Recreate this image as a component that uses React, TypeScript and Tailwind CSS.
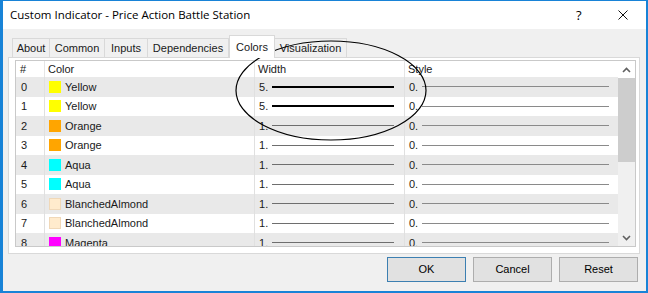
import React from "react";

const rows = [
  { n: 0, name: "Yellow", c: "#ffff00", w: 5 },
  { n: 1, name: "Yellow", c: "#ffff00", w: 5 },
  { n: 2, name: "Orange", c: "#ffa500", w: 1 },
  { n: 3, name: "Orange", c: "#ffa500", w: 1 },
  { n: 4, name: "Aqua", c: "#00ffff", w: 1 },
  { n: 5, name: "Aqua", c: "#00ffff", w: 1 },
  { n: 6, name: "BlanchedAlmond", c: "#ffebcd", w: 1 },
  { n: 7, name: "BlanchedAlmond", c: "#ffebcd", w: 1 },
  { n: 8, name: "Magenta", c: "#ff00ff", w: 1 },
];

const tabs = [
  { t: "About", w: "w-[38px]" },
  { t: "Common", w: "w-[55px]" },
  { t: "Inputs", w: "w-[43px]" },
  { t: "Dependencies", w: "w-[81px]" },
  { t: "Colors", w: "w-[46px]", active: true },
  { t: "Visualization", w: "w-[72px]" },
];

function Chevron({ up }: { up?: boolean }) {
  return (
    <svg width="9" height="6" viewBox="0 0 9 6">
      <path
        d={up ? "M1 5 L4.5 1.5 L8 5" : "M1 1 L4.5 4.5 L8 1"}
        fill="none"
        stroke="#606060"
        strokeWidth="1.6"
      />
    </svg>
  );
}

export default function App() {
  return (
    <div
      className="relative w-[648px] h-[293px] bg-[#1883d7] pt-[1px] pl-[3px] pr-[2px] pb-[2px] text-[#1a1a1a]"
      style={{ fontFamily: '"Liberation Sans", Arial, sans-serif' }}
    >
      <div className="h-full w-full bg-[#f0f0f0] flex flex-col">
        {/* title bar */}
        <div className="h-[28px] bg-white flex items-center shrink-0">
          <div
            className="pl-[7px] text-[11.5px] text-black flex-1 leading-none"
            style={{ fontFamily: '"Open Sans", "Noto Sans", sans-serif' }}
          >
            Custom Indicator - Price Action Battle Station
          </div>
          <div className="w-[14px] text-[13px] text-black leading-none mr-[28px]" style={{ fontFamily: '"Open Sans", sans-serif' }}>?</div>
          <svg width="10" height="10" viewBox="0 0 10 10" className="mr-[18px]">
            <path d="M0.5 0.5 L9.5 9.5 M9.5 0.5 L0.5 9.5" stroke="#111" strokeWidth="1" />
          </svg>
        </div>

        {/* tabs */}
        <div className="flex items-end h-[28px] pl-[9px] shrink-0">
          {tabs.map((t) =>
            t.active ? (
              <div
                key={t.t}
                className={`${t.w} h-[23px] bg-white border border-b-0 border-[#d9d9d9] flex items-center justify-center text-[11px] relative top-[1px] z-10`}
              >
                {t.t}
              </div>
            ) : (
              <div
                key={t.t}
                className={`${t.w} h-[19px] bg-[#f0f0f0] border border-b-0 border-l-0 first:border-l border-[#d9d9d9] flex items-center justify-center text-[11px]`}
              >
                {t.t}
              </div>
            )
          )}
        </div>

        {/* panel */}
        <div className="ml-[5px] mr-[6px] h-[197px] bg-white border border-[#d9d9d9] pl-[6px] pr-[3px] pt-[2px] shrink-0">
          <div className="h-[187px] border border-[#c9c9c9] flex overflow-hidden">
            <div className="flex-1 flex flex-col overflow-hidden">
              {/* header */}
              <div className="flex h-[16px] shrink-0 text-[11px] bg-white items-center">
                <div className="w-[29px] h-full pl-[4px] flex items-center border-r border-[#e5e5e5]">#</div>
                <div className="w-[210px] h-full pl-[3px] flex items-center border-r border-[#e5e5e5]">Color</div>
                <div className="w-[150px] h-full pl-[3px] flex items-center border-r border-[#e5e5e5]">Width</div>
                <div className="flex-1 h-full pl-[3px] flex items-center">Style</div>
              </div>
              {rows.map((r, i) => (
                <div
                  key={i}
                  className={`flex h-[19.5px] shrink-0 text-[11px] items-center ${i % 2 === 0 ? "bg-[#e9e9e9]" : "bg-white"}`}
                >
                  <div className="w-[29px] h-full pl-[5px] flex items-center border-r border-[#e0e0e0]">{r.n}</div>
                  <div className="w-[210px] h-full pl-[4px] flex items-center gap-[4px] border-r border-[#e0e0e0]">
                    <span
                      className="w-[12px] h-[12px] inline-block"
                      style={{
                        backgroundColor: r.c,
                        boxShadow: r.c === "#ffebcd" ? "inset 0 0 0 1px #f0d8b8" : undefined,
                      }}
                    />
                    <span>{r.name}</span>
                  </div>
                  <div className="w-[150px] h-full pl-[4px] pr-[10px] flex items-center gap-[4px] border-r border-[#e0e0e0]">
                    <span>{r.w}.</span>
                    <span
                      className={`flex-1 ${r.w === 5 ? "h-[2px] bg-black" : "h-[1px] bg-[#6e6e6e]"}`}
                    />
                  </div>
                  <div className="flex-1 h-full pl-[4px] pr-[9px] flex items-center gap-[4px]">
                    <span>0.</span>
                    <span className="flex-1 h-[1px] bg-[#8a8a8a]" />
                  </div>
                </div>
              ))}
            </div>
            {/* scrollbar */}
            <div className="w-[17px] bg-[#f0f0f0] flex flex-col shrink-0">
              <div className="h-[17px] flex items-center justify-center bg-white">
                <Chevron up />
              </div>
              <div className="h-[84px] bg-[#cdcdcd]" />
              <div className="flex-1" />
              <div className="h-[17px] flex items-center justify-center">
                <Chevron />
              </div>
            </div>
          </div>
        </div>

        {/* buttons */}
        <div className="flex justify-end gap-[7px] pr-[8px] pt-[3px]">
          <button className="w-[79px] h-[25px] bg-[#e1e1e1] border border-[#3c7fb1] text-[11px] text-black">
            OK
          </button>
          <button className="w-[79px] h-[25px] bg-[#e1e1e1] border border-[#adadad] text-[11px] text-black">
            Cancel
          </button>
          <button className="w-[79px] h-[25px] bg-[#e1e1e1] border border-[#adadad] text-[11px] text-black">
            Reset
          </button>
        </div>
      </div>

      {/* annotation ellipse */}
      <svg
        className="absolute left-0 top-0 pointer-events-none"
        width="648"
        height="293"
        viewBox="0 0 648 293"
      >
        <ellipse cx="331" cy="90.5" rx="95" ry="49.5" fill="none" stroke="#000" strokeWidth="1.2" />
      </svg>
    </div>
  );
}
